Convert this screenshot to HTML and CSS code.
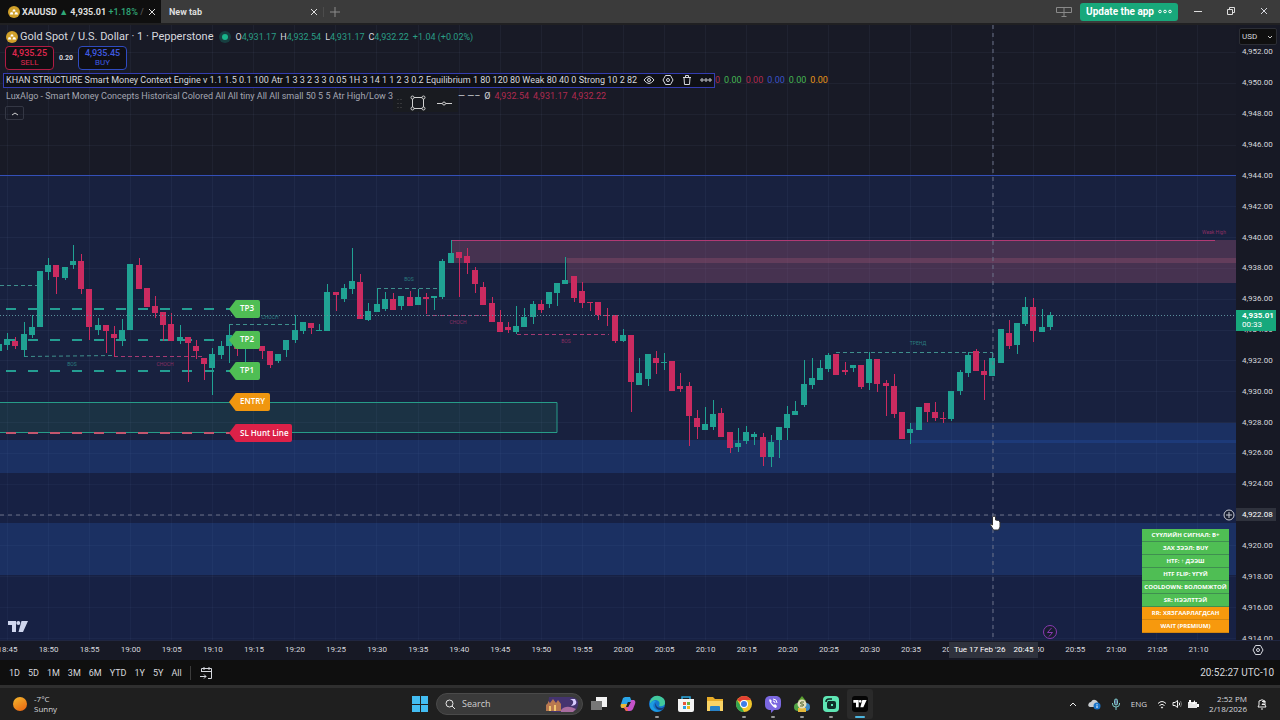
FILE: index.html
```html
<!DOCTYPE html>
<html lang="en">
<head>
  <meta charset="UTF-8">
  <title>XAUUSD 4,935.01</title>
  <meta name="viewport" content="width=device-width, initial-scale=1.0">
  <link rel="stylesheet" href="styles.css">
  <script src="script.js" defer></script>
</head>
<body>
<svg class="defs" width="0" height="0" aria-hidden="true">
  <symbol id="gold" viewBox="0 0 12 12">
    <circle cx="6" cy="6" r="6" fill="#d0a02a"/>
    <path d="M4.4 5.4 5 3.4h2l.6 2zM1.9 8.4l.7-2.2h2l.8 2.2zM6.4 8.4l.8-2.2h2l.9 2.2z" fill="#fff"/>
  </symbol>
  <symbol id="tv" viewBox="0 0 20 12">
    <path d="M0 0h8v11H4V4H0zM13.500 0H20l-5 11h-4.500zM10.300 0a2 2 0 1 1 0 4 2 2 0 0 1 0-4z"/>
  </symbol>
  <symbol id="close" viewBox="0 0 8 8">
    <path d="m1 1 6 6m0-6L1 7" fill="none" stroke="currentColor"/>
  </symbol>
  <symbol id="hex" viewBox="0 0 12 12">
    <path d="M3.500 1.500h5L11 6 8.500 10.500h-5L1 6z" fill="none" stroke="currentColor"/>
    <circle cx="6" cy="6" r="1.500" fill="none" stroke="currentColor"/>
  </symbol>
</svg>

<div class="app">
  <!-- Window tabs -->
  <header class="tabs">
    <div class="tab active">
      <svg class="coin"><use href="#gold"/></svg>
      <span class="tab-title">XAUUSD <i class="up">▲</i> 4,935.01 <em class="up">+1.18%</em> <em class="dim">/</em></span>
      <button class="icon-btn" aria-label="Close tab"><svg width="8" height="8"><use href="#close"/></svg></button>
    </div>
    <div class="tab">
      <span class="tab-title">New tab</span>
      <button class="icon-btn" aria-label="Close tab"><svg width="8" height="8"><use href="#close"/></svg></button>
    </div>
    <button class="icon-btn add-tab" aria-label="Add tab"><svg width="10" height="10" viewBox="0 0 10 10" stroke="#8c8c8c"><path d="M5 0v10M0 5h10"/></svg></button>
    <div class="window-tools">
      <button class="icon-btn" aria-label="Layout"><svg width="16" height="12" viewBox="0 0 16 12" fill="none" stroke="#8a8a8a"><path d="M.5 1.500h15v5H.5zM8 1v10M5.500 10.500h5"/></svg></button>
      <button class="update">Update the app
        <svg width="14" height="5" viewBox="0 0 14 5" fill="none" stroke="#fff"><circle cx="2" cy="2.500" r="1.300"/><circle cx="7" cy="2.500" r="1.300"/><circle cx="12" cy="2.500" r="1.300"/></svg>
      </button>
      <button class="win-btn" aria-label="Minimize"><svg width="8" height="8" viewBox="0 0 8 8" stroke="#ddd"><path d="M0 4.500h8"/></svg></button>
      <button class="win-btn" aria-label="Restore"><svg width="8" height="8" viewBox="0 0 8 8" fill="none" stroke="#ddd"><path d="M.5 2.500h5v5h-5zM2.500 2V.5h5v5H6"/></svg></button>
      <button class="win-btn" aria-label="Close"><svg width="8" height="8"><use href="#close"/></svg></button>
    </div>
  </header>

  <!-- Chart -->
  <main class="chart">
    <div class="pane">
      <svg id="plot" class="plot" viewBox="0 25 1236 615" preserveAspectRatio="xMinYMin meet">
        <rect class="bg-top" x="0" y="25" width="1236" height="151"/>
        <rect class="bg-mid" x="0" y="176" width="1236" height="464"/>
        <g id="grid" class="grid"></g>
        <g class="zones">
          <path class="demand" d="M0 440h1236v33H0zM0 523h1236v52H0z"/>
          <path class="demand" d="M911 423h325v20H911z"/>
          <path class="deep" d="M0 473h1236v50H0zM0 575h1236v65H0z"/>
          <path class="supply" d="M451 240h785v23H451z"/>
          <path class="supply" d="M567 258h669v25H567z"/>
          <path class="supply-line" d="M451 240.500h764"/>
          <path class="blue-line" d="M0 175.500h1236"/>
          <path class="entry-box" d="M-5 402.500h562v30H-5z"/>
        </g>
        <g class="levels">
          <path class="tp-line" d="M6 309h226M6 340h226M6 371h226"/>
          <path class="sl-line" d="M6 433h226"/>
          <path class="thin up-line" d="M0 285.500h38M24 356.500l90-1M229 324.500h70M377 288.500h62M836 352.500h157"/>
          <path class="thin down-line" d="M114 356.500h90M426 315.500h64M517 334.500h92"/>
        </g>
        <g id="candles"></g>
        <path class="last-line" d="M0 315.500h1236"/>
        <g class="tiny">
          <text class="t-up" x="72" y="366">BOS</text>
          <text class="t-down" x="165" y="366">CHOCH</text>
          <text class="t-up" x="270" y="319">CHOCH</text>
          <text class="t-up" x="409" y="281">BOS</text>
          <text class="t-down" x="458" y="324">CHOCH</text>
          <text class="t-down" x="566" y="343">BOS</text>
          <text class="t-up" x="918" y="345">ТРЕНД</text>
          <text class="t-down" x="1214" y="234">Weak High</text>
        </g>
        <g class="tags">
          <path class="green" d="M229 309l6-8q0-1 2-1h21q2 0 2 2v14q0 2-2 2h-21q-2 0-2-1zM229 340l6-8q0-1 2-1h21q2 0 2 2v14q0 2-2 2h-21q-2 0-2-1zM229 371l6-8q0-1 2-1h21q2 0 2 2v14q0 2-2 2h-21q-2 0-2-1z"/>
          <path class="orange" d="M229 402l6-8q0-1 2-1h31q2 0 2 2v14q0 2-2 2h-31q-2 0-2-1z"/>
          <path class="red" d="M229 433l6-8q0-1 2-1h53q2 0 2 2v14q0 2-2 2h-53q-2 0-2-1z"/>
          <text x="240" y="311">TP3</text>
          <text x="240" y="342">TP2</text>
          <text x="240" y="373">TP1</text>
          <text x="240" y="404">ENTRY</text>
          <text x="240" y="436">SL Hunt Line</text>
        </g>
        <path class="cross" d="M993 25v615M0 515h1224"/>
        <g class="plus"><circle cx="1229" cy="515" r="5"/><path d="M1226 515h6M1229 512v6"/></g>
        <g class="bolt"><circle cx="1050" cy="632" r="6.500"/><path d="M1051.500 628l-4 4.500h5l-3.500 4"/></g>
        <use href="#tv" class="tv-mark" x="8" y="621" width="20" height="12"/>
        <path class="hand" d="M992.500 525v-8q1.500-2 3 0v3l3 .5 1.500 1.500v5l-1.500 3h-5l-3-5q0-2 2 0z"/>
      </svg>

      <div class="legend">
        <div class="symbol-row">
          <svg class="coin"><use href="#gold"/></svg>
          <h1>Gold Spot / U.S. Dollar · 1 · Pepperstone</h1>
          <span class="status"></span>
          <p class="ohlc"><span>O<b>4,931.17</b></span> <span>H<b>4,932.54</b></span> <span>L<b>4,931.17</b></span> <span>C<b>4,932.22</b></span> <b>+1.04 (+0.02%)</b></p>
        </div>
        <div class="trade-row">
          <button class="trade sell"><span>4,935.25</span>SELL</button>
          <span class="spread">0.20</span>
          <button class="trade buy"><span>4,935.45</span>BUY</button>
        </div>
        <div class="study-row">
          <div class="study selected">
            <span>KHAN STRUCTURE Smart Money Context Engine v 1.1 1.5 0.1 100 Atr 1 3 3 2 3 3 0.05 1H 3 14 1 1 2 3 0.2 Equilibrium 1 80 120 80 Weak 80 40 0 Strong 10 2 82</span>
            <div class="study-tools">
              <button class="icon-btn" aria-label="Hide"><svg width="12" height="12" viewBox="0 0 12 12" fill="none" stroke="currentColor"><path d="M1 6q5-7 10 0-5 7-10 0z"/><circle cx="6" cy="6" r="1.500"/></svg></button>
              <button class="icon-btn" aria-label="Settings"><svg width="12" height="12"><use href="#hex"/></svg></button>
              <button class="icon-btn" aria-label="Remove"><svg width="12" height="12" viewBox="0 0 12 12" fill="none" stroke="currentColor"><path d="M2 3.500h8M4.500 3V1.500h3V3M3 3.500l.5 7h5l.5-7"/></svg></button>
              <button class="icon-btn" aria-label="More"><svg width="12" height="12" viewBox="0 0 12 12" fill="none" stroke="currentColor"><circle cx="2" cy="6" r="1.200"/><circle cx="6" cy="6" r="1.200"/><circle cx="10" cy="6" r="1.200"/></svg></button>
            </div>
          </div>
          <div class="values"><i class="v-red">0</i><i class="v-green">0.00</i><i class="v-red">0.00</i><i class="v-blue">0.00</i><i class="v-green">0.00</i><i class="v-orange">0.00</i></div>
        </div>
        <div class="study-row">
          <span class="study lux">LuxAlgo - Smart Money Concepts Historical Colored All All tiny All All small 50 5 5 Atr High/Low 3</span>
          <div class="draw-bar">
            <svg width="60" height="20" viewBox="0 0 60 20" fill="none" stroke="#d0d0d0">
              <path d="M3 6v1m0 3v1m0 3v1M6 6v1m0 3v1m0 3v1" stroke="#555"/>
              <path d="M19 4.500h8M19 15.500h8M17.500 6v8M28.500 6v8"/>
              <circle cx="17.500" cy="4.500" r="1.500"/><circle cx="28.500" cy="4.500" r="1.500"/><circle cx="17.500" cy="15.500" r="1.500"/><circle cx="28.500" cy="15.500" r="1.500"/>
              <path d="M42 10.500h5m4 0h6"/><circle cx="49" cy="10.500" r="1.500"/>
            </svg>
          </div>
          <div class="values"><span class="dashes">— —–</span><span>Ø</span><i class="v-red">4,932.54</i><i class="v-red">4,931.17</i><i class="v-red">4,932.22</i></div>
        </div>
        <button class="icon-btn collapse" aria-label="Collapse legend"><svg width="8" height="5" viewBox="0 0 8 5" fill="none" stroke="#d0d0d0"><path d="m1 4 3-2 3 2"/></svg></button>
      </div>

      <table class="signals">
        <tr><td>СҮҮЛИЙН СИГНАЛ: B+</td></tr>
        <tr><td>ЗАХ ЗЭЭЛ: BUY</td></tr>
        <tr><td>HTF: ↑ ДЭЭШ</td></tr>
        <tr><td>HTF FLIP: ҮГҮЙ</td></tr>
        <tr><td>COOLDOWN: БОЛОМЖТОЙ</td></tr>
        <tr><td>SR: НЭЭЛТТЭЙ</td></tr>
        <tr class="warn"><td>RR: ХЯЗГААРЛАГДСАН</td></tr>
        <tr class="warn"><td>WAIT (PREMIUM)</td></tr>
      </table>
    </div>

    <aside class="price-axis">
      <div id="prices" class="prices"></div>
      <div class="currency">
        <select aria-label="Currency"><option>USD</option></select>
        <svg width="6" height="4" viewBox="0 0 6 4" fill="none" stroke="#ccc"><path d="m1 1 2 2 2-2"/></svg>
      </div>
      <div class="last-price"><b>4,935.01</b>00:33</div>
      <div class="cross-price">4,922.08</div>
    </aside>
  </main>

  <div class="time-axis">
    <div id="times" class="times"></div>
    <div class="cross-time"><span>Tue 17 Feb '26</span><span>20:45</span></div>
    <button class="icon-btn axis-settings" aria-label="Axis settings"><svg width="12" height="12"><use href="#hex"/></svg></button>
  </div>

  <!-- Date ranges -->
  <nav class="ranges">
    <button>1D</button><button>5D</button><button>1M</button><button>3M</button><button>6M</button><button>YTD</button><button>1Y</button><button>5Y</button><button>All</button>
    <button class="goto" aria-label="Go to date"><svg width="14" height="14" viewBox="0 0 14 14" fill="none" stroke="currentColor"><path d="M2.500 6V2.500h10v10H9M2.500 5.500h10M5 1v3M10 1v3M1 10.500h6M5 8.500l2 2-2 2"/></svg></button>
    <span class="clock">20:52:27 UTC-10</span>
  </nav>

  <!-- Windows taskbar -->
  <footer class="taskbar">
    <div class="weather">
      <span class="sun"></span>
      <p>-7°C<br>Sunny</p>
    </div>
    <div class="apps">
      <button class="app-btn" aria-label="Start"><svg viewBox="0 0 18 18"><path d="M1 1h8v8H1zM10 1h7v8h-7zM1 10h8v7H1zM10 10h7v7h-7z" fill="#43bdf2"/></svg></button>
      <label class="search">
        <svg width="11" height="11" viewBox="0 0 11 11" fill="none" stroke="#e8e8e8"><circle cx="4.500" cy="4.500" r="3.500"/><path d="m7 7 3 3"/></svg>
        <input type="text" placeholder="Search" aria-label="Search">
        <svg class="night" width="34" height="18" viewBox="0 0 34 16">
          <path d="M4 1h23q7 1 6 8-1 7-8 7H8q-5 0-5-7z" fill="#44346f"/>
          <path d="M1 15V9l2-2V5l2 2 3-4 3 4 2-3 3 4v7z" fill="#b87850"/>
          <path d="M4 10h2v5H4zM9 9h2v6H9z" fill="#f2c66d"/>
          <path d="M16 14q5-6 15-1l-3 3H16z" fill="#a86da0"/>
          <path d="M25 3q6 2 1 7 8-1 4-7z" fill="#d9ccff"/>
        </svg>
      </label>
      <button class="app-btn" aria-label="Task view"><svg viewBox="0 0 18 18"><path d="M6 2h11v10H6z" fill="#f2f2f2"/><path d="M1 6h11v9H1z" fill="#777"/></svg></button>
      <button class="app-btn" aria-label="Copilot"><svg viewBox="0 0 18 18"><path d="M6 2h5l2 5H9L7 13H3Q1 12 2 9l2-6z" fill="#2aa5e8"/><path d="M3 9h5l-1 4H3Q1 12 2 9z" fill="#e8b737"/><path d="M12 5h3q2 1 1 4l-2 5q-1 2-3 2H7l-2-4h4z" fill="#c552c9"/><path d="m8 12 1 4H7l-2-3z" fill="#f06a46"/><path d="m9 7-2 5h2l3-5z" fill="#222"/></svg></button>
      <button class="app-btn open" aria-label="Edge"><svg viewBox="0 0 18 18"><circle cx="9" cy="9" r="8" fill="#1577cf"/><path d="M2 6Q5 0 11 1q7 2 6 8-2 3-6 2 2-5-3-6-4 0-6 4z" fill="#42c99c"/><path d="M8 6q-5 4-1 8 4 3 8 0-4 4-9 2-5-2-4-7 2-4 6-3z" fill="#1d9de0"/><path d="M8 8q-1 5 6 5l2-1v2q-4 2-7 0-3-3-1-6z" fill="#163e79"/></svg></button>
      <button class="app-btn" aria-label="Store"><svg viewBox="0 0 18 18"><path d="M1 4h16v11q0 2-2 2H3q-2 0-2-2z" fill="#f4f4f4"/><path d="M5 4V2h8v2" fill="none" stroke="#2aa8e0" stroke-width="1.500"/><path d="M6 7h3v3H6z" fill="#e8563b"/><path d="M10 7h3v3h-3z" fill="#6cb33f"/><path d="M6 11h3v3H6z" fill="#2aa0e0"/><path d="M10 11h3v3h-3z" fill="#f3b81d"/></svg></button>
      <button class="app-btn" aria-label="Explorer"><svg viewBox="0 0 18 18"><path d="M1 2h6l2 2h8v12H1z" fill="#e8ac28"/><path d="M1 6h16v10H1z" fill="#fad365"/><path d="M4 16v-4q0-1 1-1h8q1 0 1 1v4z" fill="#2982c6"/></svg></button>
      <button class="app-btn open" aria-label="Chrome"><svg viewBox="0 0 18 18"><circle cx="9" cy="9" r="8" fill="#f1c62c"/><path d="M9 9 2 5q3-4 7-4 5 0 7 4H9z" fill="#e34133"/><path d="M2 5l5 8 2 4Q4 17 2 13 0 9 2 5z" fill="#31a352"/><circle cx="9" cy="9" r="4" fill="#fff"/><circle cx="9" cy="9" r="3" fill="#3f7ee8"/></svg></button>
      <button class="app-btn open" aria-label="Viber"><svg viewBox="0 0 18 18"><path d="M5 1h8q4 1 4 5v4q0 5-5 5h-2l-3 3v-3H5q-4-1-4-5V6q0-4 4-5z" fill="#7b68e0"/><path d="M6 4q-2 1 1 5t5 4l1-2-2-2-1 1q-2-1-3-3l1-1z" fill="#fff"/><path d="M9 4q4 0 4 4M9 6q2 0 2 2" fill="none" stroke="#fff"/></svg></button>
      <button class="app-btn open" aria-label="Trading terminal"><svg viewBox="0 0 18 18"><path d="m9 1 4 5H5z" fill="#5aa02f"/><circle cx="5" cy="12" r="4" fill="#4fa344"/><circle cx="13" cy="12" r="4" fill="#3d8ac5"/><path d="M5 13h8v4H5z" fill="#e5b93c"/><circle cx="9" cy="9" r="4.500" fill="#e3dfbc"/><path d="M11 7H8q-1 1 0 2h2q1 1 0 2H7" fill="none" stroke="#566b32"/></svg></button>
      <button class="app-btn open" aria-label="Camera"><svg viewBox="0 0 18 18"><rect x="1" y="1" width="16" height="16" rx="4" fill="#5fe6b4"/><path d="M6 6h6q2 0 2 2v4q0 2-2 2H7q-2 0-2-2V8z" fill="#102d27"/><path d="M4 7q0-3 3-3h3" fill="none" stroke="#102d27" stroke-width="1.500"/><path d="M9 9h2v2H9z" fill="#5fe6b4"/></svg></button>
      <button class="app-btn current" aria-label="TradingView"><svg viewBox="0 0 18 18"><rect x="1" y="1" width="16" height="16" rx="3" fill="#050505"/><use href="#tv" x="2" y="5" width="14" height="8" fill="#fff"/></svg></button>
    </div>
    <div class="tray">
      <svg width="8" height="6" viewBox="0 0 8 6" fill="none" stroke="#eee"><path d="m1 5 3-3 3 3"/></svg>
      <svg width="14" height="12" viewBox="0 0 14 12"><path d="M3 9Q0 8 2 5q1-1 2-1 2-4 6-1 2 2 1 4l-1 2z" fill="#c9cdd1"/><circle cx="10" cy="8" r="3.500" fill="#1a74c9"/><path d="M10 7.500V10M10 6v.8" stroke="#fff"/></svg>
      <svg width="10" height="12" viewBox="0 0 10 12" fill="none" stroke="#7fc9c9"><rect x="3.500" y="1" width="3" height="6" rx="1.500" fill="#568"/><path d="M1.500 5v1q0 3 3.500 3t3.500-3V5M5 9v3"/></svg>
      <span class="lang">ENG</span>
      <div class="system">
        <svg width="10" height="9" viewBox="0 0 10 9" fill="none" stroke="#eee"><path d="M1 3.500q4-4 8 0M2.500 5.500q2.500-2.500 5 0"/><circle cx="5" cy="7.500" r=".6" fill="#eee"/></svg>
        <svg width="10" height="10" viewBox="0 0 10 10" fill="none" stroke="#eee"><path d="M1 3.500h2l2.500-2v7L3 6.500H1zM7 3.500q1.500 1.500 0 3"/><path d="M8.500 2q2 3 0 6" stroke="#777"/></svg>
        <svg width="12" height="10" viewBox="0 0 12 10"><path d="M1 3h9v6H1z" fill="#e6e6e6"/><path d="M10 5h2v3h-2zM2 1h2v3H2zM8 1l-3 4h3" fill="#fff"/></svg>
      </div>
      <p class="date">2:52 PM<br>2/18/2026</p>
      <svg width="10" height="12" viewBox="0 0 10 12" fill="none" stroke="#eee"><path d="M2 3q3-2.500 6 0v4l1 2H1l1-2zM4 11h2M5 3.500h3L5 6.500h3"/></svg>
    </div>
  </footer>
</div>
</body>
</html>
```
FILE: styles.css
```css
* {
  box-sizing: border-box;
}

body {
  margin: 0;
  background: #0f0f0f;
  color: #d6d8de;
  font-family: Roboto, "Open Sans", sans-serif;
  font-size: 9px;
  line-height: 12px;
}

h1, p {
  margin: 0;
}

button, input, select {
  font: inherit;
  color: inherit;
  border: none;
  background: none;
  padding: 0;
}

svg {
  flex-shrink: 0;
}

.defs {
  position: absolute;
}

.app {
  display: flex;
  flex-direction: column;
  height: 100vh;
  min-height: 480px;
  overflow: hidden;
}

.icon-btn {
  display: flex;
  align-items: center;
  justify-content: center;
}

.coin {
  width: 12px;
  height: 12px;
}

/* Tabs */
.tabs {
  display: flex;
  align-items: center;
  height: 25px;
  flex-shrink: 0;
  background: #3b3b3b;
  border-bottom: 2px solid #202022;
}

.tab {
  display: flex;
  align-items: center;
  width: 157px;
  height: 100%;
  padding: 0 0 0 8px;
  color: #dedede;
  font-weight: 700;
}

.tab.active {
  width: 161px;
  gap: 2px;
  padding-right: 5px;
  background: #0f0f0f;
}

.tab-title {
  flex: 1;
  white-space: nowrap;
}

.tab i, .tab em {
  font-style: normal;
}

.tab em {
  font-weight: 500;
}

.up {
  color: #2fa878;
}

.dim {
  color: #555;
}

.add-tab {
  margin-left: 5px;
  padding-left: 6px;
  border-left: 1px solid #4c4c4c;
}

.window-tools {
  display: flex;
  align-items: center;
  margin-left: auto;
}

.update {
  display: flex;
  align-items: center;
  gap: 4px;
  height: 18px;
  margin: 0 3px 0 8px;
  padding: 0 6px;
  border-radius: 3px;
  background: #18a87b;
  color: #fff;
  font-size: 10px;
  font-weight: 700;
}

.win-btn {
  width: 33px;
  height: 20px;
}

/* Chart */
.chart {
  display: flex;
  flex: 1;
  min-height: 0;
  background: #171925;
}

.pane {
  position: relative;
  flex: 1;
  min-width: 0;
  overflow: hidden;
}

.plot {
  display: block;
  width: 100%;
  height: 100%;
}

.bg-top { fill: #181a26; }
.bg-mid { fill: #18213f; }
.grid { stroke: #9aa8d8; stroke-opacity: .06; }
.demand { fill: #2450a8; fill-opacity: .34; }
.deep { fill: #14215a; fill-opacity: .2; }
.supply { fill: #98506e; fill-opacity: .36; }
.supply-line { stroke: #b03a74; }
.blue-line { stroke: #3450b8; }
.entry-box { fill: #2a8060; fill-opacity: .18; stroke: #279c88; }

.tp-line, .sl-line {
  stroke: #249e92;
  stroke-width: 2;
  stroke-dasharray: 10 12;
}

.sl-line {
  stroke: #c4566e;
}

.thin {
  fill: none;
  stroke-dasharray: 4 3;
}

.up-line { stroke: #3f8f8c; }
.down-line { stroke: #a43a72; }
.candle-up { fill: #20a293; stroke: #20a293; }
.candle-down { fill: #cb2b60; stroke: #cb2b60; }

.last-line {
  stroke: #5b8f9c;
  stroke-dasharray: 1 2;
}

.tiny {
  font-size: 5px;
  text-anchor: middle;
}

.t-up { fill: #2b7f80; }
.t-down { fill: #8c2f63; }

.tags {
  fill: #fff;
  font-family: "Open Sans", sans-serif;
  font-size: 8px;
  font-weight: 600;
}

.tags .green { fill: #4fbe54; }
.tags .orange { fill: #f0960f; }
.tags .red { fill: #dc2148; }

.cross {
  fill: none;
  stroke: #6d7389;
  stroke-dasharray: 4 4;
}

.plus, .bolt {
  fill: #171d30;
  stroke: #c8cbd4;
}

.bolt {
  stroke: #8a3ab2;
}

.tv-mark { fill: #cfd6ee; }
.hand { fill: #fff; stroke: #333; }

/* Legend */
.legend {
  position: absolute;
  top: 4px;
  left: 0;
}

.symbol-row {
  display: flex;
  align-items: center;
  height: 15px;
  padding-left: 6px;
}

.symbol-row h1 {
  margin: 0 6px 0 2px;
  font-size: 11px;
  font-weight: 400;
}

.status {
  width: 6px;
  height: 6px;
  margin: 0 8px 0 2px;
  border-radius: 50%;
  background: #19b48a;
  box-shadow: 0 0 0 3px #173f40;
}

.ohlc {
  display: flex;
  gap: 4px;
}

.ohlc b {
  color: #2a9d85;
  font-weight: 400;
}

.trade-row {
  display: flex;
  align-items: center;
  gap: 5px;
  padding: 2px 0 2px 5px;
}

.trade {
  display: flex;
  flex-direction: column;
  align-items: center;
  justify-content: center;
  width: 49px;
  height: 24px;
  border: 1px solid #b01c44;
  border-radius: 4px;
  background: #0f0f14;
  color: #e02850;
  font-size: 8px;
  line-height: 9px;
}

.trade span {
  font-size: 9px;
  font-weight: 500;
}

.trade.buy {
  border-color: #2f4bc0;
  color: #3f5ae0;
}

.spread {
  font-size: 7px;
  font-weight: 700;
}

.study-row {
  display: flex;
  align-items: center;
  height: 16px;
  white-space: nowrap;
}

.study {
  padding-left: 6px;
}

.study.selected {
  display: flex;
  align-items: center;
  gap: 6px;
  height: 15px;
  margin-left: 3px;
  padding: 0 2px;
  border: 1px solid #343db0;
  background: #0f1016;
}

.study-tools {
  display: flex;
  gap: 7px;
}

.values {
  display: flex;
  gap: 4px;
}

.values i {
  font-style: normal;
}

.v-red { color: #b02a50; }
.v-green { color: #45b552; }
.v-blue { color: #3a52c8; }
.v-orange { color: #e8951a; }

.lux {
  color: #a4a7b2;
}

.draw-bar {
  align-self: flex-start;
  width: 65px;
  height: 24px;
  padding: 5px 2px;
  background: #191b20;
}

.collapse {
  width: 19px;
  height: 14px;
  margin: 2px 5px;
  border: 1px solid #343744;
  border-radius: 2px;
}

/* Signal table */
.signals {
  position: absolute;
  right: 7px;
  bottom: 7px;
  width: 87px;
  border-spacing: 0;
  color: #fff;
  font-family: "Open Sans", sans-serif;
  font-size: 6px;
  font-weight: 700;
  line-height: 12px;
  text-align: center;
  white-space: nowrap;
}

.signals td {
  padding: 0;
  border-bottom: 1px solid #3f8f50;
  background: #4fbe54;
}

.signals .warn td {
  border-bottom-color: #d5860f;
  background: #f7990d;
}

/* Axes */
.price-axis {
  position: relative;
  display: flex;
  width: 44px;
  overflow: hidden;
  font-size: 8px;
}

.prices {
  display: grid;
  flex: 1;
  grid-auto-rows: 1fr;
  align-items: center;
  margin: 12px 0 -14px;
  padding-left: 6px;
}

.currency {
  position: absolute;
  top: 3px;
  left: 3px;
  display: flex;
  align-items: center;
  width: 38px;
  height: 17px;
  padding: 0 3px 0 2px;
  border: 1px solid #2c2e35;
  border-radius: 2px;
  background: #0f0f0f;
}

.currency select {
  flex: 1;
  min-width: 0;
  appearance: none;
}

.last-price, .cross-price {
  position: absolute;
  left: 0;
  width: 40px;
  padding-left: 6px;
  color: #fff;
}

.last-price {
  top: 285px;
  height: 21px;
  padding-top: 1px;
  background: #17a87c;
  line-height: 9px;
}

.last-price b {
  display: block;
  font-weight: 700;
}

.cross-price {
  top: 483px;
  background: #2f323d;
  line-height: 13px;
}

.time-axis {
  position: relative;
  height: 20px;
  flex-shrink: 0;
  background: #171925;
  border-top: 1px solid #202640;
  font-size: 8px;
}

.times {
  display: grid;
  grid-auto-flow: column;
  grid-auto-columns: 1fr;
  margin: 0 61px 0 -13px;
  line-height: 18px;
  text-align: center;
}

.cross-time {
  position: absolute;
  top: 1px;
  left: 949px;
  display: flex;
  gap: 8px;
  padding: 0 5px;
  background: #2f323d;
  color: #fff;
  line-height: 16px;
}

.axis-settings {
  position: absolute;
  top: 3px;
  right: 16px;
}

/* Ranges */
.ranges {
  display: flex;
  align-items: center;
  gap: 8px;
  height: 25px;
  flex-shrink: 0;
  padding: 0 6px 0 9px;
}

.goto {
  display: flex;
  padding-left: 8px;
  border-left: 1px solid #3c3c3c;
}

.clock {
  margin-left: auto;
  font-size: 10px;
}

/* Taskbar */
.taskbar {
  display: grid;
  grid-template-columns: 1fr auto 1fr;
  align-items: center;
  height: 35px;
  flex-shrink: 0;
  padding: 0 13px;
  border-top: 3px solid #2f2f2f;
  background: #1f1f1f;
  font-family: "Open Sans", sans-serif;
  font-size: 8px;
  line-height: 10px;
}

.weather, .apps, .tray, .system {
  display: flex;
  align-items: center;
}

.weather {
  gap: 7px;
}

.sun {
  width: 14px;
  height: 14px;
  border-radius: 50%;
  background: linear-gradient(150deg, #f5b92e, #e8600f);
}

.apps {
  gap: 3px;
}

.app-btn {
  position: relative;
  width: 26px;
  height: 30px;
  padding: 4px;
}

.app-btn svg {
  display: block;
  width: 18px;
  height: 18px;
}

.app-btn.open::after, .app-btn.current::after {
  content: "";
  position: absolute;
  bottom: 1px;
  left: 11px;
  width: 4px;
  height: 2px;
  border-radius: 1px;
  background: #999;
}

.app-btn.current {
  border-radius: 3px;
  background: #2a2a2a;
}

.app-btn.current::after {
  left: 8px;
  width: 10px;
  background: #4cb6e0;
}

.search {
  display: flex;
  align-items: center;
  gap: 6px;
  width: 147px;
  height: 22px;
  padding: 0 3px 0 8px;
  border: 1px solid #4a4a4a;
  border-radius: 11px;
  background: #3a3a3a;
}

.search input {
  flex: 1;
  min-width: 0;
  font-size: 9px;
}

.search input::placeholder {
  color: #d0d0d0;
}

.tray {
  justify-content: flex-end;
  gap: 10px;
}

.system {
  gap: 5px;
}

.date {
  text-align: right;
}
```
FILE: script.js
```javascript
// Minute candles from 18:44: [direction, open/close top, bottom, high, low] in plot units
const candles = [
  'u 344 351 344 351', 'u 339 345 333 350', 'd 341 346 337 349', 'u 334 350 322 357', 'u 327 335 315 338',
  'u 271 327 271 327', 'u 265 272 258 280', 'd 265 277 265 294', 'u 267 278 267 280', 'u 261 265 245 269',
  'd 261 289 254 294', 'd 289 327 289 340', 'u 325 330 318 335', 'd 325 331 325 353', 'd 334 338 326 357',
  'u 330 341 319 346', 'u 264 330 264 330', 'd 265 289 258 289', 'd 288 307 288 307', 'd 306 313 296 318',
  'd 312 325 312 341', 'd 324 341 313 341', 'u 337 341 325 344', 'd 337 343 337 382', 'd 346 351 340 359',
  'd 358 364 358 380', 'u 354 368 348 395', 'u 346 355 341 359', 'u 335 346 325 363', 'd 342 349 342 356',
  'u 338 348 338 362', 'd 343 349 343 349', 'd 346 351 346 359', 'd 351 365 351 368', 'u 354 361 354 363',
  'u 340 350 340 357', 'u 330 340 315 343', 'u 322 331 322 334', 'd 323 328 323 334', 'u 330 331 324 331',
  'u 292 331 284 331', 'd 292 295 292 311', 'u 288 299 284 302', 'u 281 289 248 294', 'd 282 319 274 319',
  'u 311 320 303 321', 'u 304 312 288 312', 'u 299 309 292 311', 'd 299 310 293 310', 'u 296 306 296 310',
  'd 297 306 291 306', 'u 297 305 289 305', 'd 297 299 293 314', 'u 296 298 296 310', 'u 261 297 259 299',
  'u 253 263 240 263', 'd 252 258 252 297', 'd 256 263 248 274', 'd 270 284 267 293', 'd 287 305 282 305',
  'd 303 322 297 322', 'd 322 332 310 332', 'd 327 330 322 333', 'u 326 332 306 334', 'u 317 327 308 327',
  'u 304 317 301 324', 'd 304 310 300 313', 'u 292 304 292 308', 'u 283 293 283 306', 'u 280 284 257 284',
  'd 276 298 276 302', 'd 291 303 282 308', 'd 302 303 302 311', 'd 302 315 302 320', 'd 315 316 308 326',
  'd 315 341 315 343', 'u 335 341 329 342', 'd 335 382 335 412', 'u 373 385 358 385', 'u 354 379 354 386',
  'd 358 363 351 374', 'u 362 363 353 370', 'd 361 391 361 391', 'd 386 389 373 392', 'd 386 416 382 446',
  'd 418 427 410 439', 'u 424 430 407 430', 'u 414 427 400 430', 'd 413 437 408 437', 'd 432 448 432 453',
  'u 443 447 428 452', 'u 432 441 426 444', 'u 434 437 432 445', 'd 437 457 433 466', 'u 442 457 435 467',
  'u 427 440 427 458', 'u 414 428 406 440', 'u 411 415 401 415', 'u 384 405 360 407', 'u 378 385 358 389',
  'u 368 380 360 380', 'u 355 369 353 372', 'd 354 375 354 375', 'd 370 372 362 375', 'u 365 368 365 372',
  'd 365 387 365 389', 'u 359 383 352 390', 'd 359 384 359 392', 'd 383 386 380 416', 'd 386 414 374 418',
  'd 412 439 412 439', 'u 429 433 423 444', 'u 407 430 407 430', 'd 403 412 403 422', 'd 412 418 402 421',
  'd 418 419 412 423', 'u 391 419 391 421', 'u 372 391 370 395', 'u 355 373 352 377', 'd 351 371 349 371',
  'd 371 375 360 400', 'u 358 376 353 376', 'u 329 363 329 363', 'd 333 346 320 349', 'u 323 345 323 354',
  'u 307 324 297 326', 'd 307 331 298 342', 'u 327 332 309 332', 'u 315 327 312 330'
];

const STEP = 8.21;
const FIRST_X = -1;

document.getElementById('candles').innerHTML = candles.map((row, i) => {
  const [dir, top, bottom, high, low] = row.split(' ');
  const x = Math.round(FIRST_X + i * STEP);
  const type = dir === 'u' ? 'candle-up' : 'candle-down';
  return `<g class="${type}"><path d="M${x + 0.5} ${high}V${low}"/>` +
    `<rect x="${x - 3}" y="${top}" width="6" height="${bottom - top}" stroke="none"/></g>`;
}).join('');

// Grid lines
let lines = '';
for (let i = 0; i < 30; i++) {
  lines += `M${Math.round(7 + i * 41.05) + 0.5} 25v615`;
}
for (let i = 0; i < 20; i++) {
  lines += `M0 ${Math.round(52 + i * 30.84) + 0.5}h1236`;
}
document.getElementById('grid').innerHTML = `<path d="${lines}"/>`;

// Axis labels
let prices = '';
for (let p = 4952; p >= 4914; p -= 2) {
  prices += `<span>4,${p - 4000}.00</span>`;
}
document.getElementById('prices').innerHTML = prices;

let times = '';
for (let m = 0; m < 30; m++) {
  const t = 18 * 60 + 45 + m * 5;
  times += `<span>${Math.floor(t / 60)}:${String(t % 60).padStart(2, '0')}</span>`;
}
document.getElementById('times').innerHTML = times;
```
